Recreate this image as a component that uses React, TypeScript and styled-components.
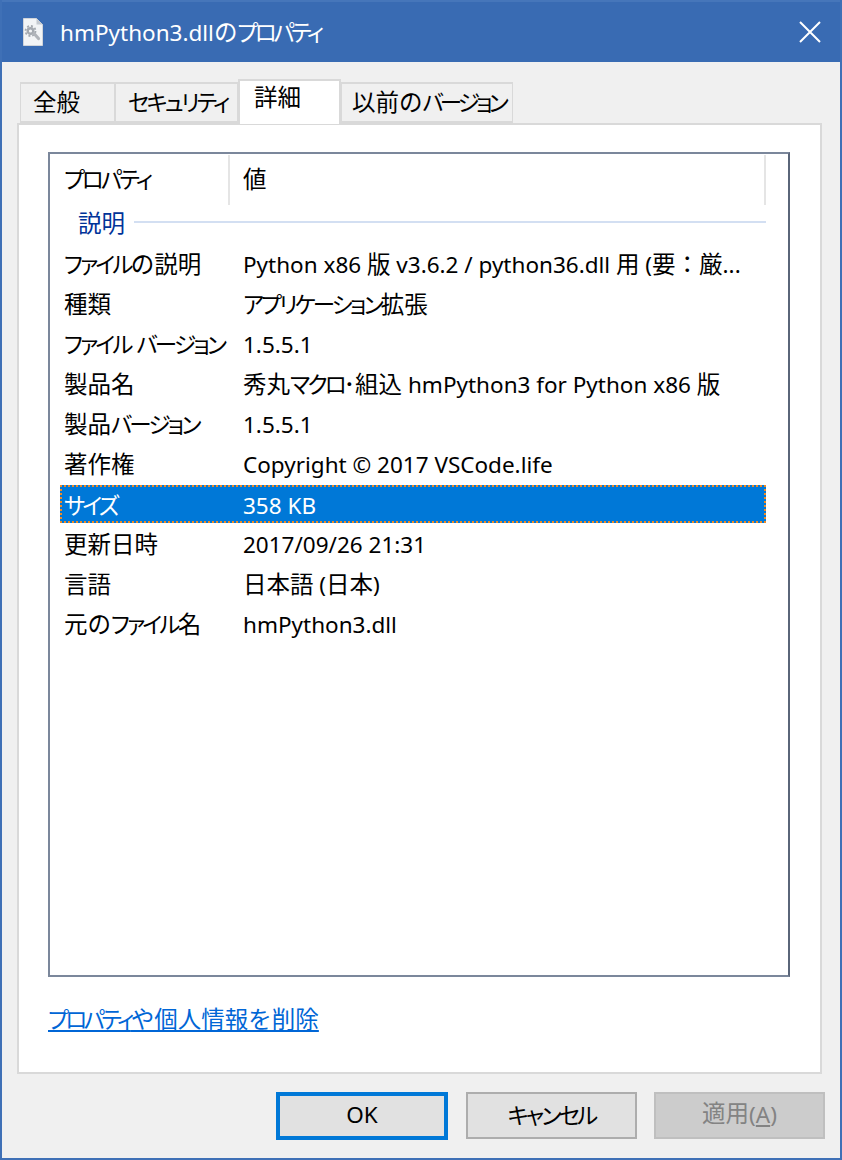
import React from "react";
import styled, { createGlobalStyle } from "styled-components";

const Global = createGlobalStyle`
  html, body { margin: 0; padding: 0; background: #f0f0f0; }
  #root { width: 842px; height: 1160px; }
`;

const FONT = `"Noto Sans", "Noto Sans CJK JP", sans-serif`;

const Kana = styled.span`
  font-feature-settings: "palt";
  letter-spacing: var(--kana-track, -0.125em);
`;

const Kanji = styled.span`
  font-size: 1.045em;
  line-height: 1;
`;

function T({ children }: { children: string }) {
  const parts =
    children.match(/[\u30A0-\u30FF]+|[\u3000-\u303F\u3040-\u309F\u4E00-\u9FFF\uFF1A]+|[^\u30A0-\u30FF\u3000-\u309F\u4E00-\u9FFF\uFF1A]+/g) ?? [];
  return (
    <>
      {parts.map((p, i) => {
        if (/[\u30A0-\u30FF]/.test(p)) return <Kana key={i}>{p}</Kana>;
        if (/[\u3000-\u309F\u4E00-\u9FFF\uFF1A]/.test(p)) return <Kanji key={i}>{p}</Kanji>;
        return <span key={i}>{p}</span>;
      })}
    </>
  );
}

const Win = styled.div`
  box-sizing: border-box;
  width: 842px;
  height: 1160px;
  border: 2px solid #3f70b6;
  border-top-width: 0;
  background: #f0f0f0;
  display: flex;
  flex-direction: column;
  font-family: ${FONT};
  font-size: 22.5px;
  color: #000;
  overflow: hidden;
`;

const TitleBar = styled.div`
  height: 62px;
  flex: none;
  background: #396bb3;
  border-top: 2px solid #4676ba;
  box-sizing: border-box;
  display: flex;
  align-items: center;
  padding-left: 21px;
  color: #fff;
`;

const TitleText = styled.div`
  --kana-track: -0.15em;
  margin-left: 17px;
  margin-bottom: 2px;
  flex: 1;
  white-space: nowrap;
`;

const CloseBtn = styled.svg`
  width: 22px;
  height: 22px;
  margin-right: 19px;
`;

const Body = styled.div`
  flex: 1;
  display: flex;
  flex-direction: column;
  padding: 17px 18px 0 15px;
`;

const Tabs = styled.div`
  display: flex;
  align-items: flex-end;
  height: 45px;
  padding-left: 3px;
  margin-bottom: -1px;
  position: relative;
  z-index: 1;
`;

const Tab = styled.div<{ $w: number; $active?: boolean; $pad: number; $track?: string }>`
  --kana-track: ${(p) => p.$track ?? "-0.125em"};
  box-sizing: border-box;
  width: ${(p) => p.$w}px;
  height: ${(p) => (p.$active ? 45 : 41)}px;
  margin-bottom: ${(p) => (p.$active ? 0 : 1)}px;
  padding-left: ${(p) => p.$pad}px;
  background: ${(p) => (p.$active ? "#ffffff" : "#f0f0f0")};
  border: 2px solid #d9d9d9;
  border-bottom: ${(p) => (p.$active ? "none" : "2px solid #d9d9d9")};
  border-left-width: ${(p) => (p.$active ? 2 : 1)}px;
  border-right-width: ${(p) => (p.$active ? 2 : 1)}px;
  white-space: nowrap;
  line-height: ${(p) => (p.$active ? 34 : 37)}px;
`;

const Panel = styled.div`
  box-sizing: border-box;
  height: 951px;
  background: #fff;
  border: 2px solid #d9d9d9;
  padding: 27px 30px 0 29px;
  display: flex;
  flex-direction: column;
`;

const List = styled.div`
  box-sizing: border-box;
  width: 742px;
  height: 825px;
  border: 2px solid #7b879b;
  border-right-color: #5a6579;
  padding-top: 1px;
  display: flex;
  flex-direction: column;
`;

const HeaderRow = styled.div`
  display: grid;
  grid-template-columns: 180px 536px;
  height: 48px;
  flex: none;
`;

const HeaderCell = styled.div<{ $pad: number }>`
  box-sizing: border-box;
  border-right: 2px solid #e5e5e5;
  padding-left: ${(p) => p.$pad}px;
  line-height: 50px;
  white-space: nowrap;
`;

const GroupRow = styled.div`
  display: flex;
  align-items: center;
  height: 38px;
  padding-left: 28px;
  width: 688px;
  flex: none;
  margin-bottom: 4px;
  color: #003399;
  white-space: nowrap;
`;

const GroupLabel = styled.span`
  margin-top: 2px;
`;

const GroupLine = styled.div`
  flex: 1;
  height: 2px;
  background: #d3dff2;
  margin-left: 9px;
`;

const Rows = styled.div`
  display: flex;
  flex-direction: column;
  gap: 2px;
  margin-left: 10px;
  width: 706px;
`;

const Row = styled.div<{ $selected?: boolean }>`
  box-sizing: border-box;
  height: 38px;
  display: grid;
  grid-template-columns: 179px 1fr;
  padding-left: ${(p) => (p.$selected ? 2 : 4)}px;
  padding-top: 1px;
  align-items: center;
  line-height: 36px;
  white-space: nowrap;
  background: ${(p) => (p.$selected ? "#0078d7" : "transparent")};
  color: ${(p) => (p.$selected ? "#fff" : "#000")};
  border: ${(p) => (p.$selected ? "2px dotted #f08a24" : "none")};
`;

const Link = styled.a`
  --kana-track: -0.155em;
  margin-top: 27px;
  align-self: flex-start;
  color: #0066d6;
  text-decoration: underline;
  white-space: nowrap;
  line-height: 32px;
`;

const Footer = styled.div`
  display: flex;
  justify-content: flex-end;
  gap: 17px;
  margin-top: 18px;
  margin-right: -3px;
`;

const Button = styled.div<{ $kind?: "default" | "disabled" }>`
  box-sizing: border-box;
  width: ${(p) => (p.$kind === "default" ? 172 : 171)}px;
  height: ${(p) => (p.$kind === "default" ? 48 : 47)}px;
  margin-right: ${(p) => (p.$kind === "default" ? 1 : 0)}px;
  padding-bottom: 3px;
  display: flex;
  align-items: center;
  justify-content: center;
  white-space: nowrap;
  background: ${(p) => (p.$kind === "disabled" ? "#cccccc" : "#e1e1e1")};
  color: ${(p) => (p.$kind === "disabled" ? "#838383" : "#000")};
  border: ${(p) =>
    p.$kind === "default"
      ? "4px solid #0078d7"
      : p.$kind === "disabled"
      ? "2px solid #bfbfbf"
      : "2px solid #adadad"};
`;

const Mnemonic = styled.span`
  text-decoration: underline;
`;

const rows: [string, string, boolean?][] = [
  ["ファイルの説明", "Python x86 版 v3.6.2 / python36.dll 用 (要：厳..."],
  ["種類", "アプリケーション拡張"],
  ["ファイル バージョン", "1.5.5.1"],
  ["製品名", "秀丸マクロ･組込 hmPython3 for Python x86 版"],
  ["製品バージョン", "1.5.5.1"],
  ["著作権", "Copyright © 2017 VSCode.life"],
  ["サイズ", "358 KB", true],
  ["更新日時", "2017/09/26 21:31"],
  ["言語", "日本語 (日本)"],
  ["元のファイル名", "hmPython3.dll"],
];

function FileIcon() {
  return (
    <svg width="20" height="28" viewBox="0 0 20 28" aria-hidden="true">
      <path d="M.5.5h13l6 6v21H.5z" fill="#f2f4f6" stroke="#d0d4da" strokeWidth="1" />
      <path d="M13.5.5v6h6z" fill="#c4c9d0" />
      <circle cx="7.5" cy="13" r="2.8" fill="none" stroke="#a4a9b0" strokeWidth="2.4" />
      <circle cx="7.5" cy="13" r="5" fill="none" stroke="#a4a9b0" strokeWidth="1.8" strokeDasharray="2 1.9" />
      <path d="M11 15.5l4.5 5" stroke="#b0b4ba" strokeWidth="3.2" strokeLinecap="round" />
    </svg>
  );
}

export default function App() {
  return (
    <Win>
      <Global />
      <TitleBar>
        <FileIcon />
        <TitleText>
          <T>hmPython3.dllのプロパティ</T>
        </TitleText>
        <CloseBtn viewBox="0 0 22 22" aria-hidden="true">
          <path d="M1 1l20 20M21 1L1 21" stroke="#fff" strokeWidth="2" fill="none" />
        </CloseBtn>
      </TitleBar>
      <Body>
        <Tabs>
          <Tab $w={95} $pad={12}><T>全般</T></Tab>
          <Tab $w={123} $pad={12}><T>セキュリティ</T></Tab>
          <Tab $w={103} $pad={14} $active><T>詳細</T></Tab>
          <Tab $w={172} $pad={10} $track="-0.17em"><T>以前のバージョン</T></Tab>
        </Tabs>
        <Panel>
          <List>
            <HeaderRow>
              <HeaderCell $pad={14}><T>プロパティ</T></HeaderCell>
              <HeaderCell $pad={13}><T>値</T></HeaderCell>
            </HeaderRow>
            <GroupRow>
              <GroupLabel><T>説明</T></GroupLabel>
              <GroupLine />
            </GroupRow>
            <Rows>
              {rows.map(([k, v, sel]) => (
                <Row key={k} $selected={sel}>
                  <span><T>{k}</T></span>
                  <span><T>{v}</T></span>
                </Row>
              ))}
            </Rows>
          </List>
          <Link><T>プロパティや個人情報を削除</T></Link>
        </Panel>
        <Footer>
          <Button $kind="default">OK</Button>
          <Button><T>キャンセル</T></Button>
          <Button $kind="disabled"><T>適用</T>(<Mnemonic>A</Mnemonic>)</Button>
        </Footer>
      </Body>
    </Win>
  );
}
